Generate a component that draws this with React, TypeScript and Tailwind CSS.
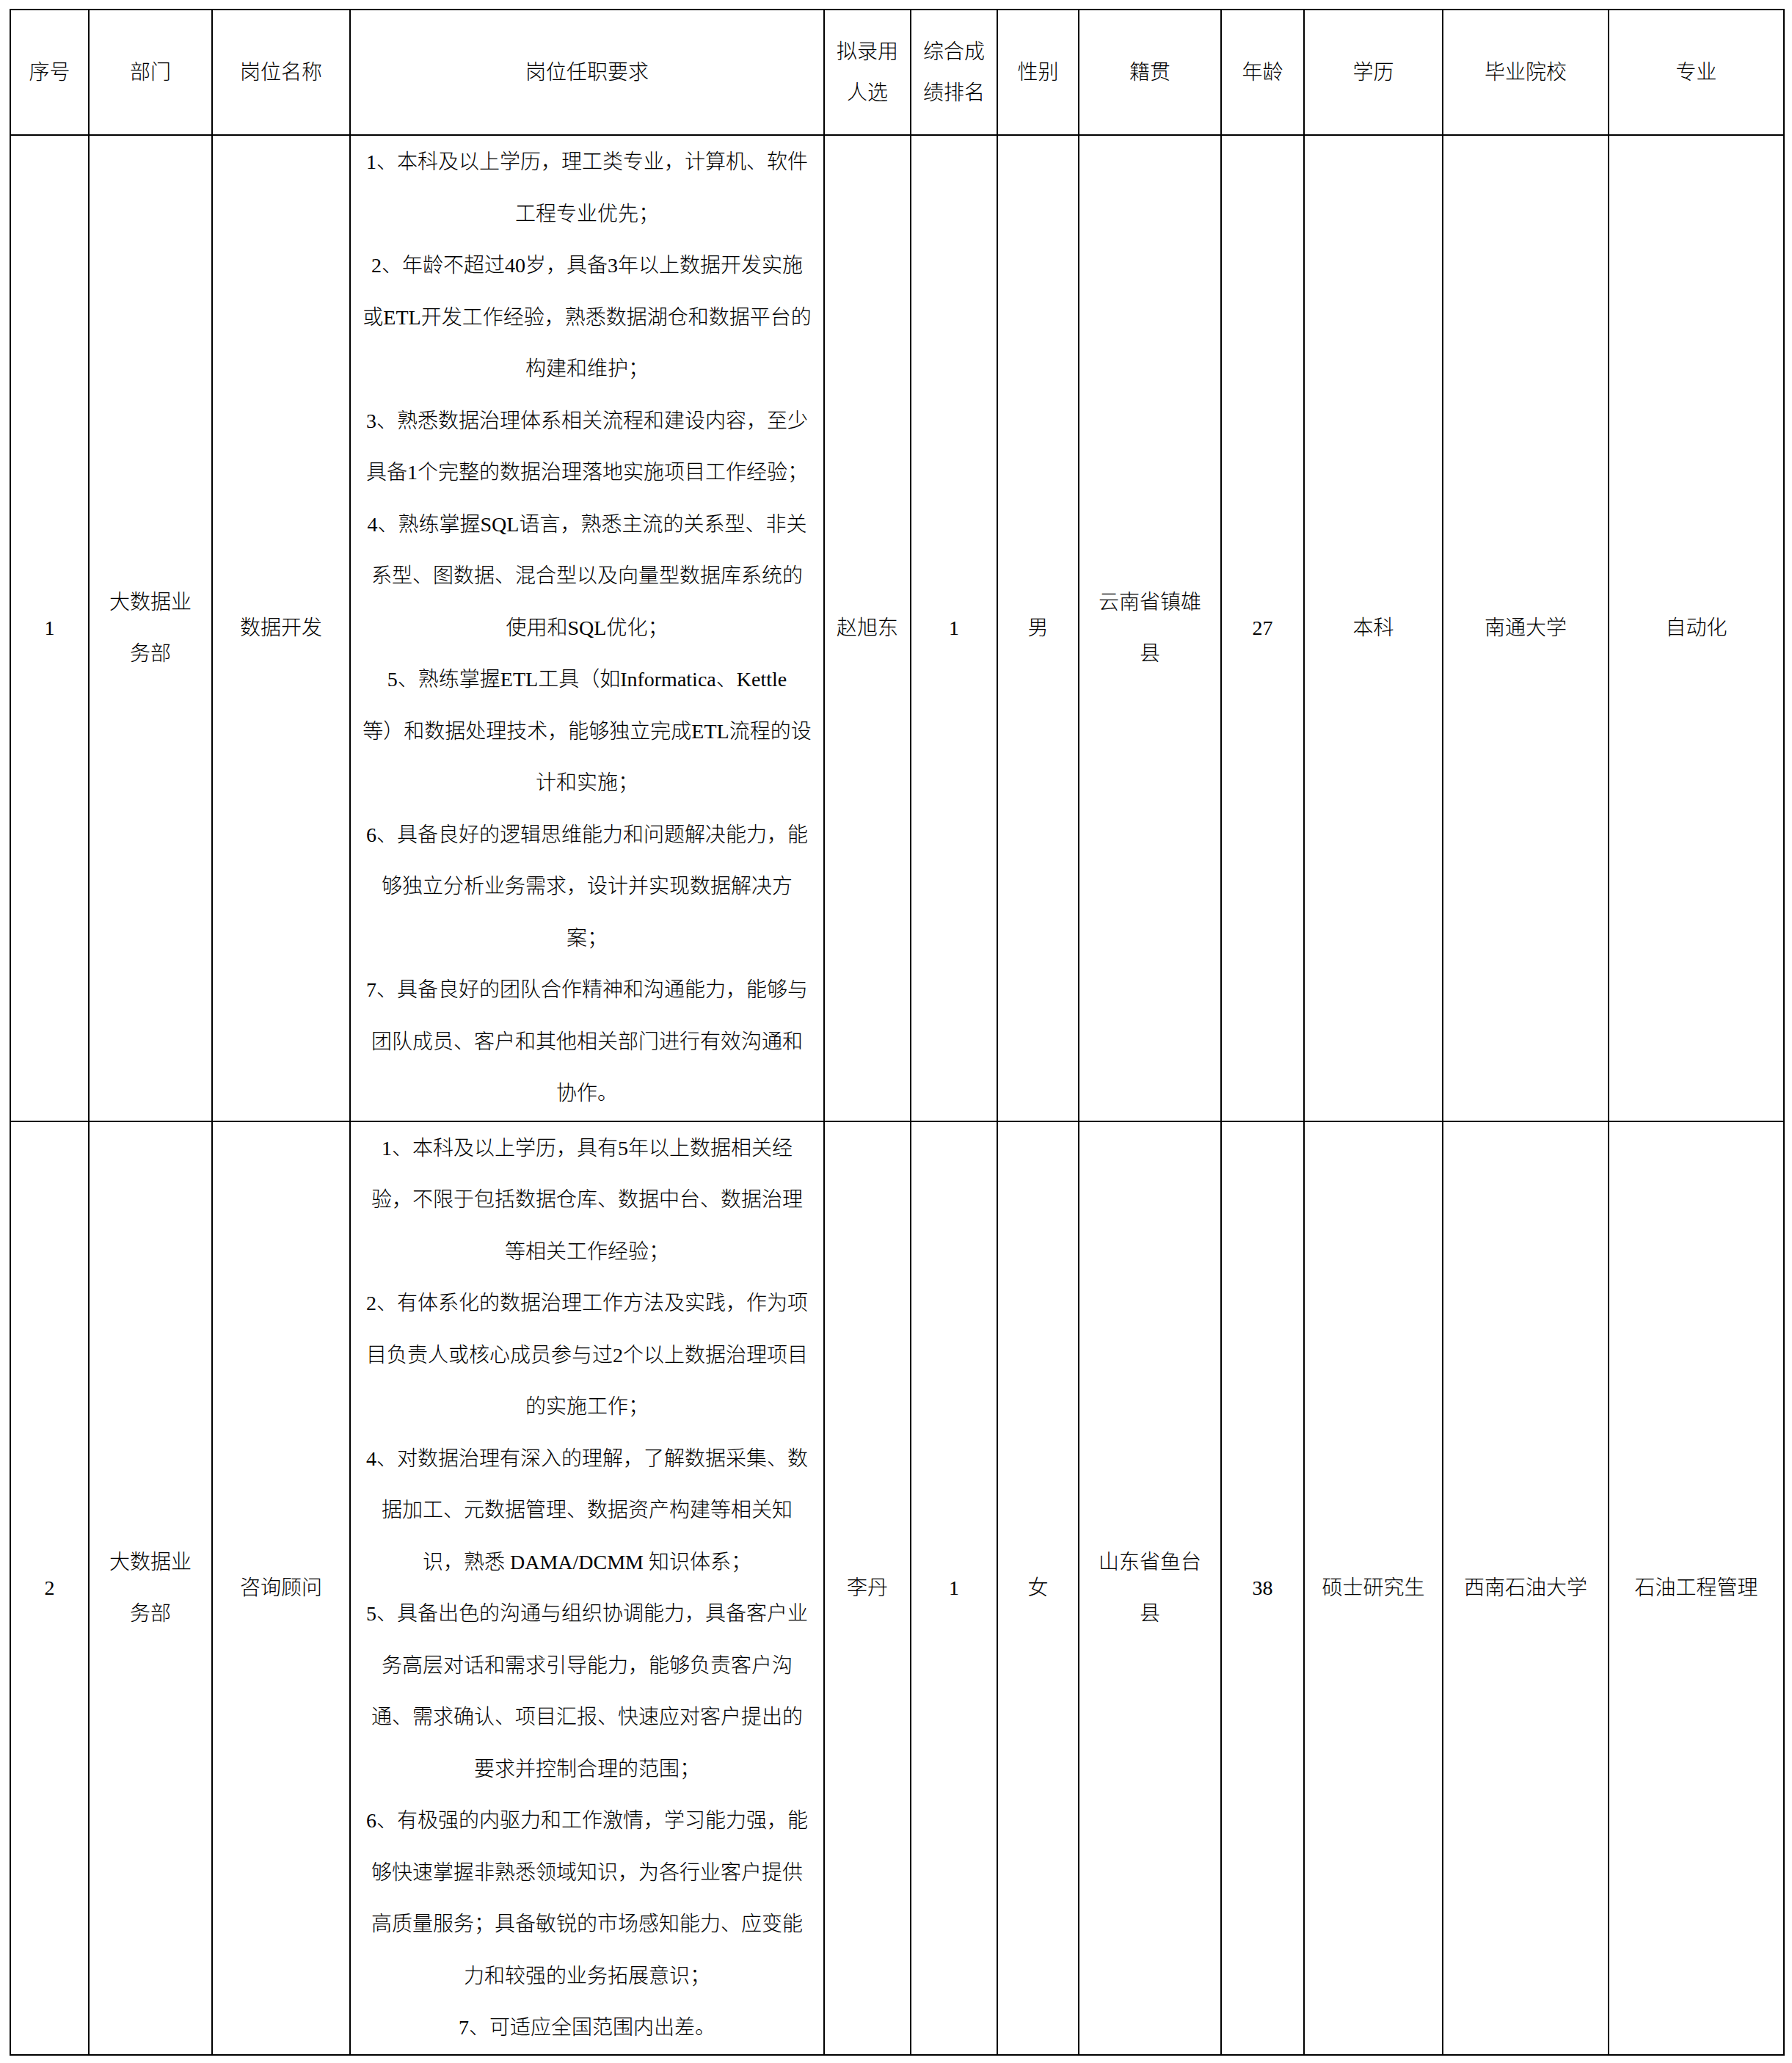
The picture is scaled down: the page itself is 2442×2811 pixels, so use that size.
import React from 'react';

type Row = {
  no: string;
  dept: string[];
  post: string;
  reqs: string[];
  name: string;
  rank: string;
  sex: string;
  origin: string[];
  age: string;
  edu: string;
  school: string;
  major: string;
  h: string;
};

const headers: string[][] = [
  ['序号'],
  ['部门'],
  ['岗位名称'],
  ['岗位任职要求'],
  ['拟录用', '人选'],
  ['综合成', '绩排名'],
  ['性别'],
  ['籍贯'],
  ['年龄'],
  ['学历'],
  ['毕业院校'],
  ['专业'],
];

const widths = ['w-[107px]', 'w-[168px]', 'w-[188px]', 'w-[646px]', 'w-[118px]', 'w-[118px]', 'w-[111px]', 'w-[194px]', 'w-[113px]', 'w-[189px]', 'w-[226px]', 'w-[239px]'];

const rows: Row[] = [
  {
    no: '1',
    dept: ['大数据业', '务部'],
    post: '数据开发',
    reqs: [
      '1、本科及以上学历，理工类专业，计算机、软件',
      '工程专业优先；',
      '2、年龄不超过40岁，具备3年以上数据开发实施',
      '或ETL开发工作经验，熟悉数据湖仓和数据平台的',
      '构建和维护；',
      '3、熟悉数据治理体系相关流程和建设内容，至少',
      '具备1个完整的数据治理落地实施项目工作经验；',
      '4、熟练掌握SQL语言，熟悉主流的关系型、非关',
      '系型、图数据、混合型以及向量型数据库系统的',
      '使用和SQL优化；',
      '5、熟练掌握ETL工具（如Informatica、Kettle',
      '等）和数据处理技术，能够独立完成ETL流程的设',
      '计和实施；',
      '6、具备良好的逻辑思维能力和问题解决能力，能',
      '够独立分析业务需求，设计并实现数据解决方',
      '案；',
      '7、具备良好的团队合作精神和沟通能力，能够与',
      '团队成员、客户和其他相关部门进行有效沟通和',
      '协作。',
    ],
    name: '赵旭东',
    rank: '1',
    sex: '男',
    origin: ['云南省镇雄', '县'],
    age: '27',
    edu: '本科',
    school: '南通大学',
    major: '自动化',
    h: 'h-[1344px]',
  },
  {
    no: '2',
    dept: ['大数据业', '务部'],
    post: '咨询顾问',
    reqs: [
      '1、本科及以上学历，具有5年以上数据相关经',
      '验，不限于包括数据仓库、数据中台、数据治理',
      '等相关工作经验；',
      '2、有体系化的数据治理工作方法及实践，作为项',
      '目负责人或核心成员参与过2个以上数据治理项目',
      '的实施工作；',
      '4、对数据治理有深入的理解，了解数据采集、数',
      '据加工、元数据管理、数据资产构建等相关知',
      '识，熟悉 DAMA/DCMM 知识体系；',
      '5、具备出色的沟通与组织协调能力，具备客户业',
      '务高层对话和需求引导能力，能够负责客户沟',
      '通、需求确认、项目汇报、快速应对客户提出的',
      '要求并控制合理的范围；',
      '6、有极强的内驱力和工作激情，学习能力强，能',
      '够快速掌握非熟悉领域知识，为各行业客户提供',
      '高质量服务；具备敏锐的市场感知能力、应变能',
      '力和较强的业务拓展意识；',
      '7、可适应全国范围内出差。',
    ],
    name: '李丹',
    rank: '1',
    sex: '女',
    origin: ['山东省鱼台', '县'],
    age: '38',
    edu: '硕士研究生',
    school: '西南石油大学',
    major: '石油工程管理',
    h: 'h-[1272px]',
  },
];

const td = 'border-2 border-black text-center align-middle p-0 leading-[70.5px]';

const Lines: React.FC<{ lines: string[] }> = ({ lines }) => (
  <>
    {lines.map((l, i) => (
      <div key={i} className="whitespace-nowrap">
        {l}
      </div>
    ))}
  </>
);

export default function App() {
  return (
    <div
      className="min-h-[2811px] bg-white pt-[12px] pl-[13px] text-black text-[28px] font-light"
      style={{ fontFamily: '"Liberation Serif", "Noto Sans CJK SC", serif' }}
    >
      <table className="table-fixed border-collapse w-[2419px]">
        <colgroup>
          {widths.map((w, i) => (
            <col key={i} className={w} />
          ))}
        </colgroup>
        <thead>
          <tr className="h-[171px]">
            {headers.map((hd, i) => (
              <th key={i} className="border-2 border-black text-center align-middle p-0 font-light leading-[56px]">
                <Lines lines={hd} />
              </th>
            ))}
          </tr>
        </thead>
        <tbody>
          {rows.map((r) => (
            <tr key={r.no} className={r.h}>
              <td className={td}>{r.no}</td>
              <td className={td}>
                <Lines lines={r.dept} />
              </td>
              <td className={td}>{r.post}</td>
              <td className={td}>
                <Lines lines={r.reqs} />
              </td>
              <td className={td}>{r.name}</td>
              <td className={td}>{r.rank}</td>
              <td className={td}>{r.sex}</td>
              <td className={td}>
                <Lines lines={r.origin} />
              </td>
              <td className={td}>{r.age}</td>
              <td className={td}>{r.edu}</td>
              <td className={td}>{r.school}</td>
              <td className={td}>{r.major}</td>
            </tr>
          ))}
        </tbody>
      </table>
    </div>
  );
}
